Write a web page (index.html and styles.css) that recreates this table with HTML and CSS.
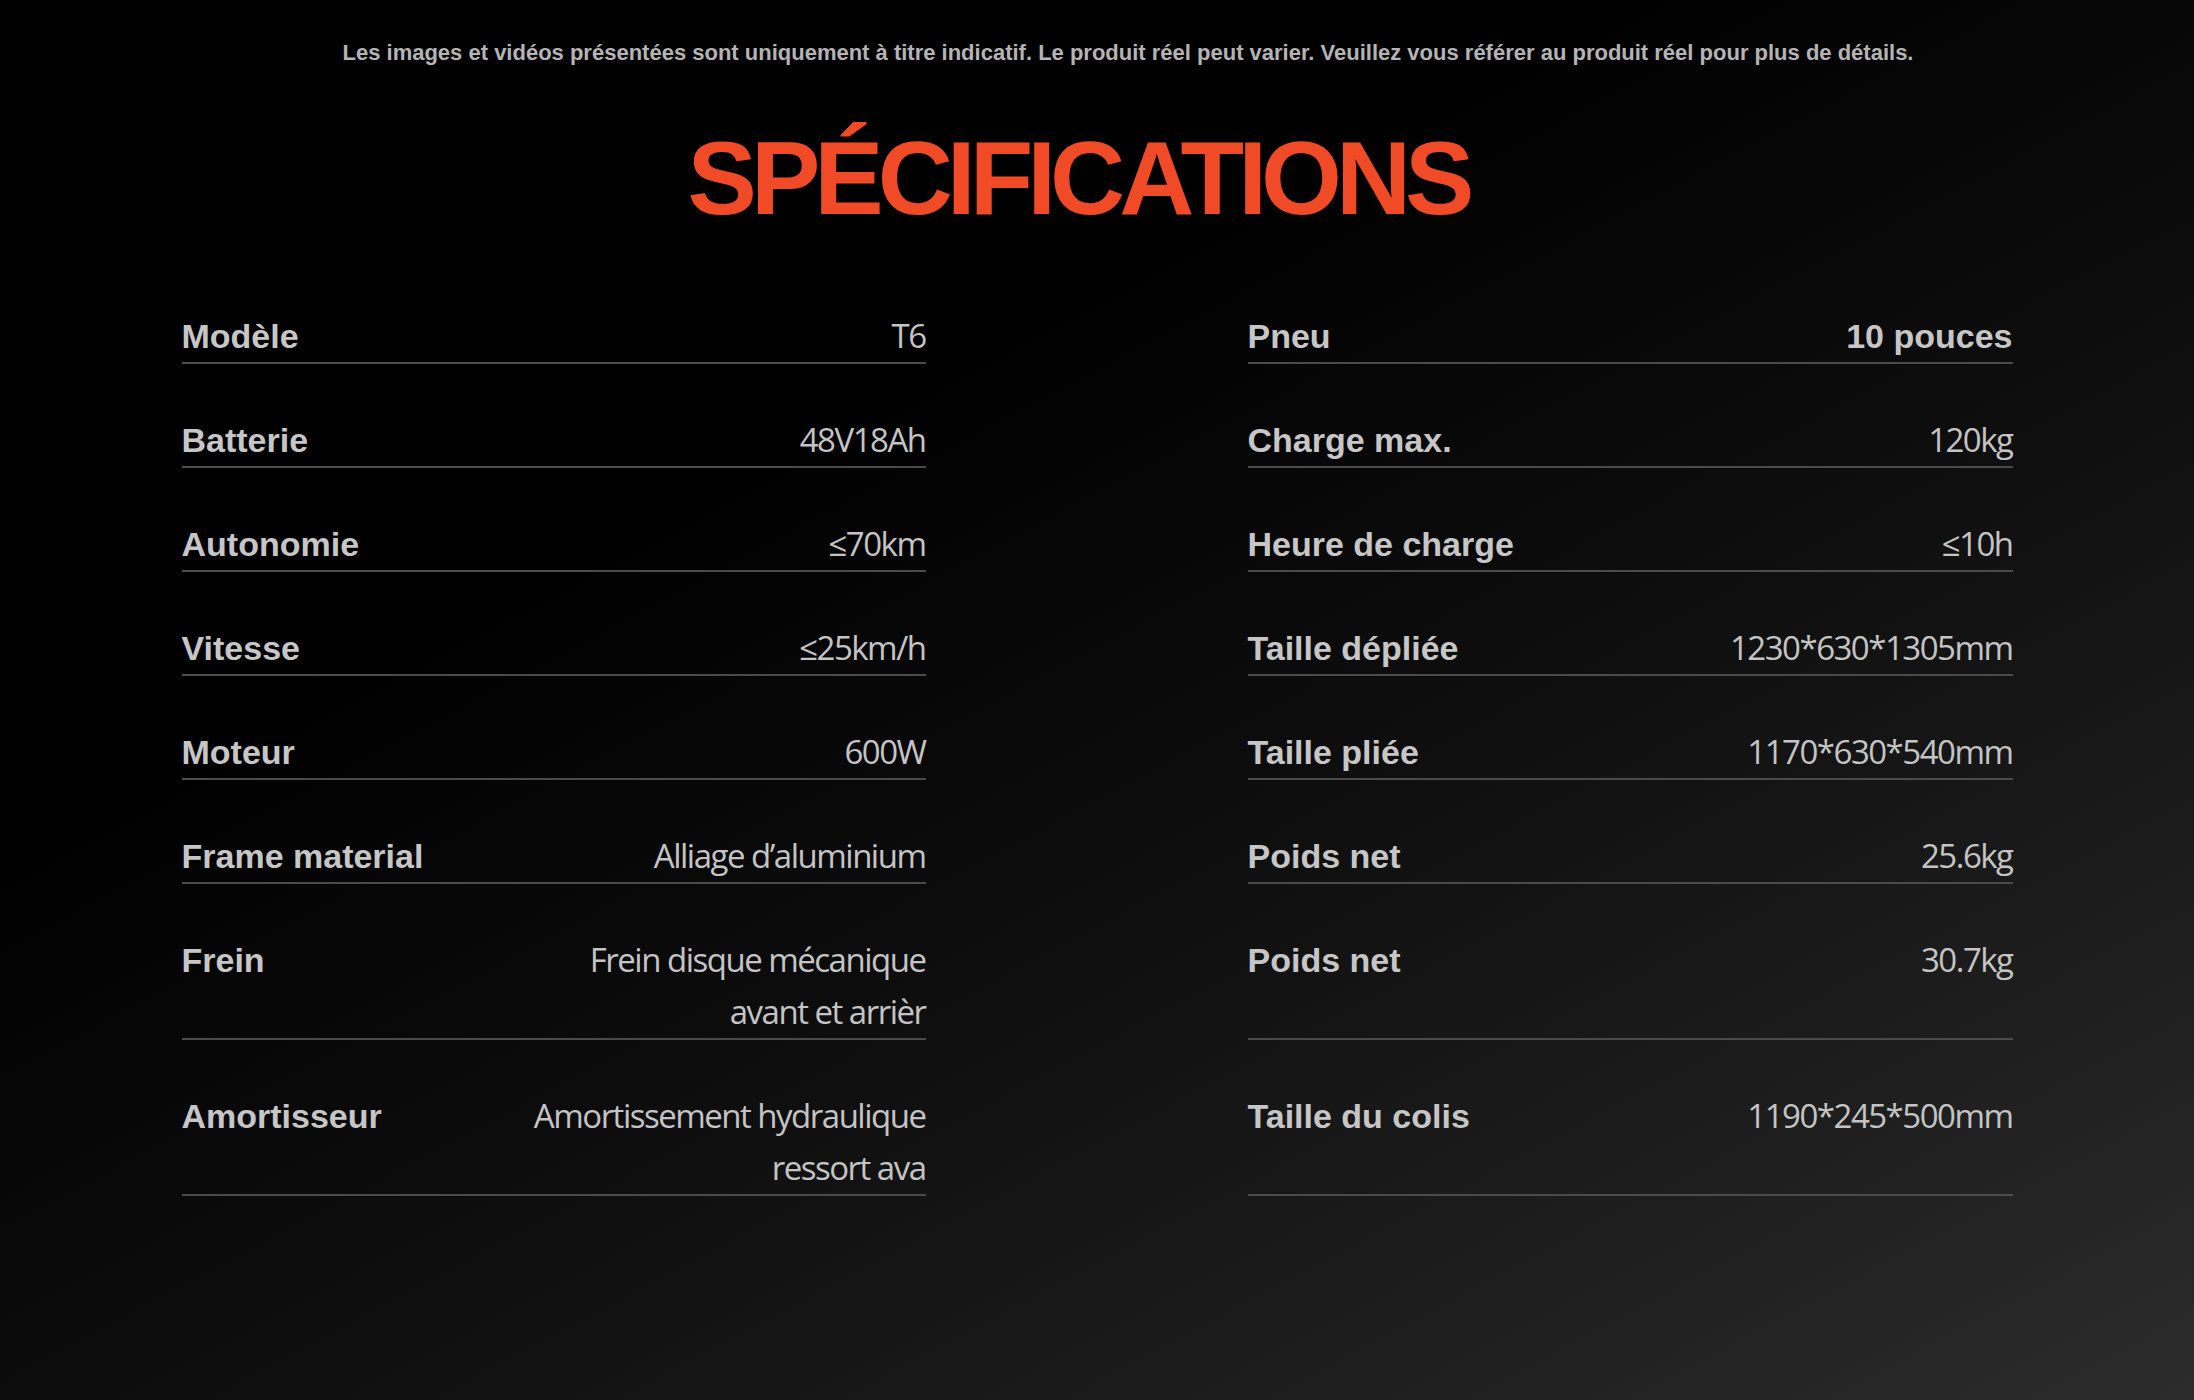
FILE: index.html
```html
<!DOCTYPE html>
<html lang="fr">
<head>
<meta charset="utf-8">
<title>Spécifications</title>
<link rel="stylesheet" href="styles.css">
</head>
<body>
<main class="page">
  <p class="disclaimer">Les images et vidéos présentées sont uniquement à titre indicatif. Le produit réel peut varier. Veuillez vous référer au produit réel pour plus de détails.</p>
  <h1 class="title">SPÉCIFICATIONS</h1>
  <section class="specs">
    <div class="row left"><span class="label">Modèle</span><span class="value">T6</span></div>
    <div class="row right"><span class="label">Pneu</span><span class="value strong">10 pouces</span></div>

    <div class="row left"><span class="label">Batterie</span><span class="value">48V18Ah</span></div>
    <div class="row right"><span class="label">Charge max.</span><span class="value">120kg</span></div>

    <div class="row left"><span class="label">Autonomie</span><span class="value">≤70km</span></div>
    <div class="row right"><span class="label">Heure de charge</span><span class="value">≤10h</span></div>

    <div class="row left"><span class="label">Vitesse</span><span class="value">≤25km/h</span></div>
    <div class="row right"><span class="label">Taille dépliée</span><span class="value">1230*630*1305mm</span></div>

    <div class="row left"><span class="label">Moteur</span><span class="value">600W</span></div>
    <div class="row right"><span class="label">Taille pliée</span><span class="value">1170*630*540mm</span></div>

    <div class="row left"><span class="label">Frame material</span><span class="value">Alliage d’aluminium</span></div>
    <div class="row right"><span class="label">Poids net</span><span class="value">25.6kg</span></div>

    <div class="row left"><span class="label">Frein</span><span class="value">Frein disque mécanique<br>avant et arrièr</span></div>
    <div class="row right"><span class="label">Poids net</span><span class="value">30.7kg</span></div>

    <div class="row left"><span class="label">Amortisseur</span><span class="value">Amortissement hydraulique<br>ressort ava</span></div>
    <div class="row right"><span class="label">Taille du colis</span><span class="value">1190*245*500mm</span></div>
  </section>
</main>
</body>
</html>
```

FILE: styles.css
```css
html, body {
  margin: 0;
  padding: 0;
}

body {
  background: #000;
}

.page {
  min-height: 1400px;
  box-sizing: border-box;
  padding-top: 38px;
  background: linear-gradient(152deg, #000 0%, #000 32%, #0c0c0c 55%, #1a1a1a 76%, #2c2c2c 100%);
  font-family: "Liberation Sans", Arial, sans-serif;
}

.disclaimer {
  margin: 0;
  padding-left: 62px;
  text-align: center;
  font-size: 22px;
  line-height: 30px;
  font-weight: 700;
  color: #b4b4b4;
  letter-spacing: 0;
}

.title {
  margin: 58px 0 0;
  padding-right: 38px;
  text-align: center;
  font-size: 104px;
  line-height: 104px;
  font-weight: 700;
  color: #f04b26;
  letter-spacing: -6px;
}

.specs {
  width: 1831px;
  margin: 80px auto 0;
  display: grid;
  grid-template-columns: 744px 765px;
  column-gap: 322px;
  row-gap: 50px;
}

.row {
  display: flex;
  justify-content: space-between;
  align-items: flex-start;
  border-bottom: 2px solid #4b4b4b;
  line-height: 52px;
}

.label {
  font-family: "Liberation Sans", Arial, sans-serif;
  font-weight: 700;
  font-size: 34px;
  color: #c6c6c6;
  white-space: nowrap;
}

.value {
  font-family: "Open Sans", "Noto Sans", sans-serif;
  font-weight: 400;
  font-size: 33px;
  color: #c4c4c4;
  letter-spacing: -1.5px;
  text-align: right;
  white-space: nowrap;
}

.value.strong {
  font-family: "Liberation Sans", Arial, sans-serif;
  font-weight: 700;
  font-size: 34px;
  letter-spacing: 0;
  color: #c6c6c6;
}
```
